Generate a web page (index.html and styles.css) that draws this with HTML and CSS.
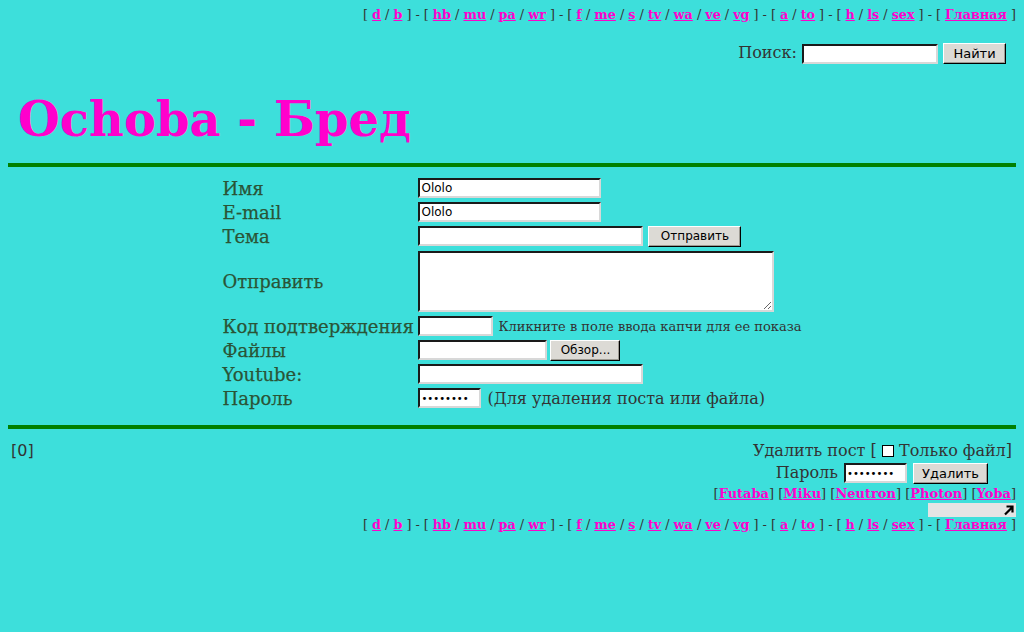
FILE: index.html
```html
<!DOCTYPE html>
<html lang="ru">
<head>
<meta charset="utf-8">
<title>Ochoba - Бред</title>
<link rel="stylesheet" href="styles.css">
</head>
<body>
<div class="nav">[ <a href="#">d</a> / <a href="#">b</a> ] - [ <a href="#">hb</a> / <a href="#">mu</a> / <a href="#">pa</a> / <a href="#">wr</a> ] - [ <a href="#">f</a> / <a href="#">me</a> / <a href="#">s</a> / <a href="#">tv</a> / <a href="#">wa</a> / <a href="#">ve</a> / <a href="#">vg</a> ] - [ <a href="#">a</a> / <a href="#">to</a> ] - [ <a href="#">h</a> / <a href="#">ls</a> / <a href="#">sex</a> ] - [ <a href="#">Главная</a> ]</div>

<div class="search">Поиск: <input class="inp search-inp" type="text"> <button class="btn">Найти</button></div>

<h1 class="title">Ochoba - Бред</h1>
<div class="hr"></div>

<div class="postform">
  <div class="lbl">Имя</div><div class="ctl"><input class="inp w182" type="text" value="Ololo"></div>
  <div class="lbl">E-mail</div><div class="ctl"><input class="inp w182" type="text" value="Ololo"></div>
  <div class="lbl">Тема</div><div class="ctl"><input class="inp w224" type="text"> <button class="btn send">Отправить</button></div>
  <div class="lbl tall">Отправить</div><div class="ctl tall"><textarea class="ta"></textarea></div>
  <div class="lbl">Код подтверждения</div><div class="ctl"><input class="inp w74" type="text"> <span class="hint">Кликните в поле ввода капчи для ее показа</span></div>
  <div class="lbl">Файлы</div><div class="ctl"><input class="inp w128" type="text"><button class="btn browse">Обзор...</button></div>
  <div class="lbl">Youtube:</div><div class="ctl"><input class="inp w224" type="text"></div>
  <div class="lbl">Пароль</div><div class="ctl"><input class="inp w62" type="password" value="12345678"> <span class="note">(Для удаления поста или файла)</span></div>
</div>
<div class="hr hr2"></div>

<div class="footer">
  <div class="pages">[0]</div>
  <div class="del">
    <div class="delrow">Удалить пост [ <span class="chk"></span> Только файл]</div>
    <div class="delrow pwrow">Пароль <input class="inp w62" type="password" value="12345678"> <button class="btn delbtn">Удалить</button></div>
    <div class="styles">[<a href="#">Futaba</a>] [<a href="#">Miku</a>] [<a href="#">Neutron</a>] [<a href="#">Photon</a>] [<a href="#">Yoba</a>]</div>
    <div class="expand"><svg width="11" height="11" viewBox="0 0 11 11"><path d="M2 9.5 L9 2.5 M3.5 1.5 H9.5 V7.5" stroke="#000" stroke-width="2.2" fill="none"/></svg></div>
  </div>
</div>

<div class="nav nav2">[ <a href="#">d</a> / <a href="#">b</a> ] - [ <a href="#">hb</a> / <a href="#">mu</a> / <a href="#">pa</a> / <a href="#">wr</a> ] - [ <a href="#">f</a> / <a href="#">me</a> / <a href="#">s</a> / <a href="#">tv</a> / <a href="#">wa</a> / <a href="#">ve</a> / <a href="#">vg</a> ] - [ <a href="#">a</a> / <a href="#">to</a> ] - [ <a href="#">h</a> / <a href="#">ls</a> / <a href="#">sex</a> ] - [ <a href="#">Главная</a> ]</div>
</body>
</html>
```
FILE: styles.css
```css
html, body {
  background: #3ddfdb;
}
body {
  margin: 8px;
  font-family: "DejaVu Serif", serif;
  font-size: 16px;
  color: #333;
}
a {
  color: #ff00cc;
  font-weight: bold;
}
.nav {
  text-align: right;
  font-size: 12.75px;
  line-height: 16px;
  margin-top: -1px;
}
.search {
  text-align: right;
  margin-top: 18px;
  margin-right: 10px;
  height: 24px;
  line-height: 24px;
}
.inp {
  box-sizing: border-box;
  height: 20px;
  border: 2px solid;
  border-color: #1a1a1a #d8d8d8 #d8d8d8 #1a1a1a;
  background: #fff;
  font-family: "DejaVu Sans", sans-serif;
  font-size: 12px;
  padding: 0 1px;
  margin: 0;
  vertical-align: middle;
}
.search-inp { width: 136px; }
.btn {
  box-sizing: border-box;
  height: 21px;
  background: #dcdad5;
  border: 1px solid;
  border-color: #fff #000 #000 #fff;
  box-shadow: inset -1px -1px 0 #9d9a92;
  font-family: "DejaVu Sans", sans-serif;
  font-size: 12px;
  color: #000;
  padding: 0 8px;
  margin: 0;
  vertical-align: middle;
}
.search .btn { width: 63px; font-size: 13px; }
.title {
  font-size: 48px;
  font-weight: bold;
  color: #ff00cc;
  margin: 0 0 0 10px;
  padding-top: 21px;
  line-height: 66px;
}
.hr {
  height: 4px;
  background: #008000;
  margin-top: 11px;
}
.postform {
  display: grid;
  grid-template-columns: 196px auto;
  width: fit-content;
  margin: 9px auto 0 auto;
}
.lbl {
  font-size: 18px;
  color: #2a5436;
  -webkit-text-stroke: 0.25px #2a5436;
  height: 24px;
  display: flex;
  align-items: center;
  white-space: nowrap;
}
.lbl.tall { height: 66px; }
.ctl {
  height: 24px;
  display: flex;
  align-items: center;
  gap: 5px;
}
.ctl.tall { height: 66px; }
.w182 { width: 183px; }
.w224 { width: 225px; }
.w74 { width: 75px; }
.w128 { width: 129px; }
.w62 { width: 63px; font-size: 10px; letter-spacing: 0; }
.send { width: 93px; }
.browse { width: 70px; margin-left: -2px; }
.ta {
  box-sizing: border-box;
  width: 356px;
  height: 61px;
  border: 2px solid;
  border-color: #1a1a1a #d8d8d8 #d8d8d8 #1a1a1a;
  margin: 0;
}
.hint {
  font-size: 13px;
  color: #333;
}
.note {
  font-size: 16px;
  color: #333;
  margin-left: 1px;
}
.hr2 { margin-top: 15px; }
.footer {
  display: flex;
  justify-content: space-between;
  margin-top: 12px;
}
.pages {
  font-family: "DejaVu Sans", sans-serif;
  padding-left: 3px;
  line-height: 20px;
  color: #333;
}
.del {
  display: flex;
  flex-direction: column;
  align-items: flex-end;
}
.delrow {
  line-height: 20px;
  margin-right: 4px;
}
.pwrow {
  margin-top: 1px;
  margin-right: 28px;
  display: flex;
  align-items: center;
  gap: 6px;
  height: 22px;
}
.delbtn { width: 75px; font-size: 13px; }
.chk {
  display: inline-block;
  box-sizing: border-box;
  width: 12px;
  height: 12px;
  border: 1px solid #000;
  background: #fff;
  vertical-align: -1px;
}
.styles {
  font-size: 13px;
  line-height: 19px;
}
.expand {
  width: 88px;
  height: 14px;
  background: #e4e4e4;
  display: flex;
  justify-content: flex-end;
  align-items: center;
  padding-right: 2px;
  box-sizing: border-box;
}
.expand svg { display: block; }
.nav2 { margin-top: 0; margin-bottom: 0; }
```
